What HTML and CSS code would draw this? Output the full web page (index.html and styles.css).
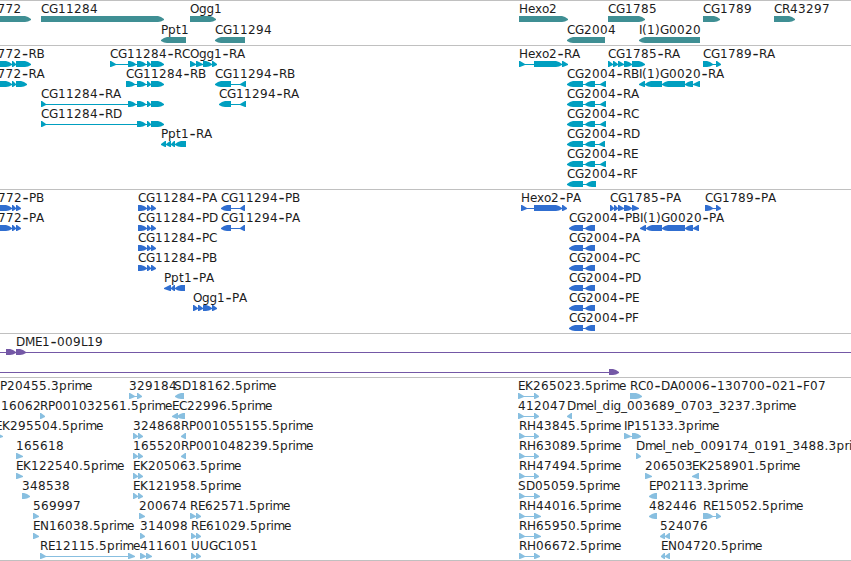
FILE: index.html
```
<!DOCTYPE html>
<html lang="en">
<head>
  <meta charset="UTF-8">
  <title>Genome Browser</title>
  <link rel="stylesheet" href="styles.css">
</head>
<body>
  <main class="browser">
    <section class="track genes" id="genes"></section>
    <section class="track transcripts" id="transcripts"></section>
    <section class="track proteins" id="proteins"></section>
    <section class="track bacs" id="bacs"></section>
    <section class="track ests" id="ests"></section>
  </main>
  <script src="tracks.js"></script>
</body>
</html>
```
FILE: styles.css
```
* {
  box-sizing: border-box;
}

body {
  margin: 0;
  background: #fff;
  color: #000;
  font-family: "DejaVu Sans", sans-serif;
  font-size: 12px;
}

.browser {
  display: flex;
  flex-direction: column;
  width: 851px;
  height: 561px;
  overflow: hidden;
  border-bottom: 1px solid #c0c0c0;
}

.track {
  flex: none;
  border-top: 1px solid #c0c0c0;
  overflow: hidden;
}

.row {
  display: block;
  width: 851px;
  height: 20px;
  overflow: visible;
}

.row text {
  fill: #1c1c1c;
}

.row .dash {
  font-size: 17px;
}

.genes {
  height: 45px;
  color: #3f8f94;
}

.genes .row {
  height: 21px;
}

.transcripts {
  height: 144px;
  color: #009fc0;
}

.proteins {
  height: 144px;
  color: #306ed0;
}

.bacs {
  height: 44px;
  color: #7458a6;
}

.ests {
  height: 183px;
  color: #88bfe0;
}

.exon,
.intron {
  fill: currentColor;
}
```
FILE: tracks.js
```
// feature: [label, x, strand, exons]
const cg11284 = [[137, 146], [147, 151], [151, 164]];
const cg2004 = [[567, 583], [585, 595], [600, 606]];
const cg2004p = [[569, 583], [585, 595]];
const pep11284 = [[138, 147], [147, 151], [151, 156]];
const pair133 = [[133, 138], [138, 143]];

const tracks = {
  genes: [
    [
      ['772', -2.5, 1, [[-9, 31]]],
      ['CG11284', 41, 1, [[41, 164]]],
      ['Ogg1', 190, 1, [[190, 216]]],
      ['Hexo2', 519, 1, [[519, 568]]],
      ['CG1785', 608, 1, [[608, 645]]],
      ['CG1789', 703, 1, [[703, 720]]],
      ['CR43297', 774, 1, [[774, 795]]]
    ],
    [
      ['Ppt1', 161, -1, [[161, 186]]],
      ['CG11294', 215, -1, [[215, 245]]],
      ['CG2004', 567, -1, [[567, 605]]],
      ['I(1)G0020', 639, -1, [[639, 700]]]
    ]
  ],
  transcripts: [
    [
      ['772-RB', -2.5, 1, [[-9, 12], [12, 16], [16, 31]]],
      ['CG11284-RC', 110, 1, [[110, 116], [128, 136], ...cg11284]],
      ['Ogg1-RA', 190, 1, [[190, 196], [196, 203], [203, 212], [212, 217]]],
      ['Hexo2-RA', 519, 1, [[519, 525], [534, 562], [562, 568]]],
      ['CG1785-RA', 608, 1, [[608, 613], [613, 618], [618, 624], [624, 632], [632, 645]]],
      ['CG1789-RA', 703, 1, [[703, 713], [716, 721]]]
    ],
    [
      ['772-RA', -2.5, 1, [[-9, 12], [12, 16], [16, 27]]],
      ['CG11284-RB', 126, 1, [[126, 135], ...cg11284]],
      ['CG11294-RB', 215, -1, [[215, 231], [240, 246]]],
      ['CG2004-RB', 567, -1, cg2004],
      ['I(1)G0020-RA', 639, -1, [[639, 645], [645, 662], [662, 685], [685, 693], [693, 700]]]
    ],
    [
      ['CG11284-RA', 41, 1, [[41, 46], [128, 136], ...cg11284]],
      ['CG11294-RA', 219, -1, [[219, 231], [240, 246]]],
      ['CG2004-RA', 567, -1, cg2004]
    ],
    [
      ['CG11284-RD', 41, 1, [[41, 46], ...cg11284]],
      ['CG2004-RC', 567, -1, cg2004]
    ],
    [
      ['Ppt1-RA', 161, -1, [[161, 166], [166, 171], [171, 175], [175, 186]]],
      ['CG2004-RD', 567, -1, [[567, 583], [585, 595], [599, 605]]]
    ],
    [
      ['CG2004-RE', 567, -1, cg2004]
    ],
    [
      ['CG2004-RF', 567, -1, [[567, 583], [586, 596]]]
    ]
  ],
  proteins: [
    [
      ['772-PB', -2, 1, [[-9, 12], [12, 16], [16, 21]]],
      ['CG11284-PA', 138, 1, pep11284],
      ['CG11294-PB', 221, -1, [[221, 231], [240, 245]]],
      ['Hexo2-PA', 521, 1, [[521, 527], [534, 562], [562, 567]]],
      ['CG1785-PA', 610, 1, [[610, 614], [614, 618], [618, 624], [624, 632], [632, 639]]],
      ['CG1789-PA', 705, 1, [[705, 713], [716, 721]]]
    ],
    [
      ['772-PA', -2, 1, [[-9, 12], [12, 16], [16, 21]]],
      ['CG11284-PD', 138, 1, pep11284],
      ['CG11294-PA', 221, -1, [[221, 231], [240, 245]]],
      ['CG2004-PB', 569, -1, cg2004p],
      ['I(1)G0020-PA', 640, -1, [[640, 646], [646, 662], [662, 685], [685, 693], [693, 699]]]
    ],
    [
      ['CG11284-PC', 138, 1, pep11284],
      ['CG2004-PA', 569, -1, cg2004p]
    ],
    [
      ['CG11284-PB', 138, 1, pep11284],
      ['CG2004-PC', 569, -1, cg2004p]
    ],
    [
      ['Ppt1-PA', 164, -1, [[164, 171], [171, 175], [175, 185]]],
      ['CG2004-PD', 569, -1, cg2004p]
    ],
    [
      ['Ogg1-PA', 193, 1, [[193, 198], [198, 203], [203, 212], [212, 217]]],
      ['CG2004-PE', 569, -1, cg2004p]
    ],
    [
      ['CG2004-PF', 569, -1, cg2004p]
    ]
  ],
  bacs: [
    [
      ['DME1-009L19', 16, 1, [[-9, -4], [6, 16], [16, 26], [860, 870]]]
    ],
    [
      ['', 0, 1, [[-9, -4], [609, 619]]]
    ]
  ],
  ests: [
    [
      ['P20455.3prime', 0, 1, []],
      ['329184', 129, 1, [[129, 135], [137, 142]]],
      ['SD18162.5prime', 174, -1, [[175, 184]]],
      ['EK265023.5prime', 518, 1, [[518, 524], [534, 539]]],
      ['RC0-DA0006-130700-021-F07', 630, 1, [[630, 642]]]
    ],
    [
      ['16062', 1, 1, []],
      ['RP001032561.5prime', 40, 1, [[40, 45]]],
      ['EC22996.5prime', 172, -1, [[172, 178], [177, 185]]],
      ['412047', 518, 1, [[518, 524], [534, 539]]],
      ['Dmel_dig_003689_0703_3237.3prime', 567, -1, [[567, 572]]]
    ],
    [
      ['EK295504.5prime', -5, 1, [[-4, 3]]],
      ['324868', 133, 1, pair133],
      ['RP001055155.5prime', 181, -1, [[181, 186]]],
      ['RH43845.5prime', 519, 1, [[519, 525], [534, 539]]],
      ['IP15133.3prime', 624, 1, [[624, 631], [632, 641]]]
    ],
    [
      ['165618', 16, 1, [[16, 23]]],
      ['165520', 133, 1, pair133],
      ['RP001048239.5prime', 181, -1, [[181, 186]]],
      ['RH63089.5prime', 519, 1, [[519, 525], [534, 539]]],
      ['Dmel_neb_009174_0191_3488.3prime', 636, 1, [[636, 641]]]
    ],
    [
      ['EK122540.5prime', 16, 1, [[16, 23]]],
      ['EK205063.5prime', 133, 1, pair133],
      ['RH47494.5prime', 519, 1, [[519, 525], [534, 539]]],
      ['206503', 645, 1, [[645, 652]]],
      ['EK258901.5prime', 692, -1, [[692, 699]]]
    ],
    [
      ['348538', 22, 1, [[22, 30]]],
      ['EK121958.5prime', 133, 1, pair133],
      ['SD05059.5prime', 518, 1, [[519, 525], [534, 540]]],
      ['EP02113.3prime', 649, -1, [[649, 657]]]
    ],
    [
      ['569997', 33, 1, [[33, 39]]],
      ['200674', 139, 1, [[139, 145]]],
      ['RE62571.5prime', 190, 1, [[190, 196], [196, 201]]],
      ['RH44016.5prime', 519, 1, [[519, 525], [534, 541]]],
      ['482446', 649, -1, [[649, 657]]],
      ['RE15052.5prime', 703, 1, [[703, 713], [716, 721]]]
    ],
    [
      ['EN16038.5prime', 33, 1, [[33, 39]]],
      ['314098', 140, 1, [[140, 145]]],
      ['RE61029.5prime', 191, 1, [[191, 196], [196, 201]]],
      ['RH65950.5prime', 519, 1, [[519, 525], [534, 541]]],
      ['524076', 660, -1, [[660, 665], [665, 670]]]
    ],
    [
      ['RE12115.5prime', 40, 1, [[40, 46], [128, 135]]],
      ['411601', 140, 1, [[140, 146], [146, 152]]],
      ['UUGC1051', 191, 1, [[191, 196], [196, 201]]],
      ['RH06672.5prime', 519, 1, [[519, 525], [534, 540]]],
      ['EN04720.5prime', 661, -1, [[661, 665], [665, 670]]]
    ]
  ]
};

// advance of every character in px, 8 when not listed
const advance = {
  G: 9, O: 9, H: 9, D: 9, M: 10, N: 9, U: 9, E: 7, P: 7, F: 7, L: 6, I: 3,
  g: 7.5, e: 7, x: 7, o: 7, t: 5, r: 4.5, i: 3, m: 10.5, l: 3,
  '-': 7, '_': 6, '.': 4, '(': 5, ')': 5
};

function label(text, x) {
  let pos = x;
  const parts = text.split(/(-)/).map(part => {
    const xs = [];
    for (const c of part) {
      xs.push(pos);
      pos += advance[c] || 8;
    }
    // the hyphen is set larger so it fills its 7px cell
    return part === '-'
      ? `<tspan class="dash" x="${xs[0] + 0.5}" y="13">-</tspan>`
      : `<tspan x="${xs.join(' ')}" y="12">${part}</tspan>`;
  });
  return `<text>${parts.join('')}</text>`;
}

function exon([start, end], strand) {
  const tail = strand > 0 ? start : end;
  const head = strand > 0 ? end : start;
  const width = end - start;
  if (width < 8) {
    const neck = tail + strand;
    return `<path class="exon" d="M${tail} 15H${neck}L${head} 18V19L${neck} 21H${tail}Z"/>`;
  }
  const neck = head - strand * 6;
  const mid = head - strand * 3;
  return `<path class="exon" d="M${tail} 15H${neck}L${mid} 16L${head} 18V19L${mid} 20.5L${neck} 21H${tail}Z"/>`;
}

function feature([text, x, strand, exons]) {
  let out = '';
  if (exons.length > 1) {
    const from = exons[0][0] + 1;
    const to = exons[exons.length - 1][1] - 2;
    out += `<rect class="intron" x="${from}" y="18" width="${to - from}" height="1"/>`;
  }
  out += exons.map(e => exon(e, strand)).join('');
  return out + (text ? label(text, x) : '');
}

for (const id in tracks) {
  document.getElementById(id).innerHTML = tracks[id]
    .map(row => `<svg class="row">${row.map(feature).join('')}</svg>`)
    .join('');
}
```
